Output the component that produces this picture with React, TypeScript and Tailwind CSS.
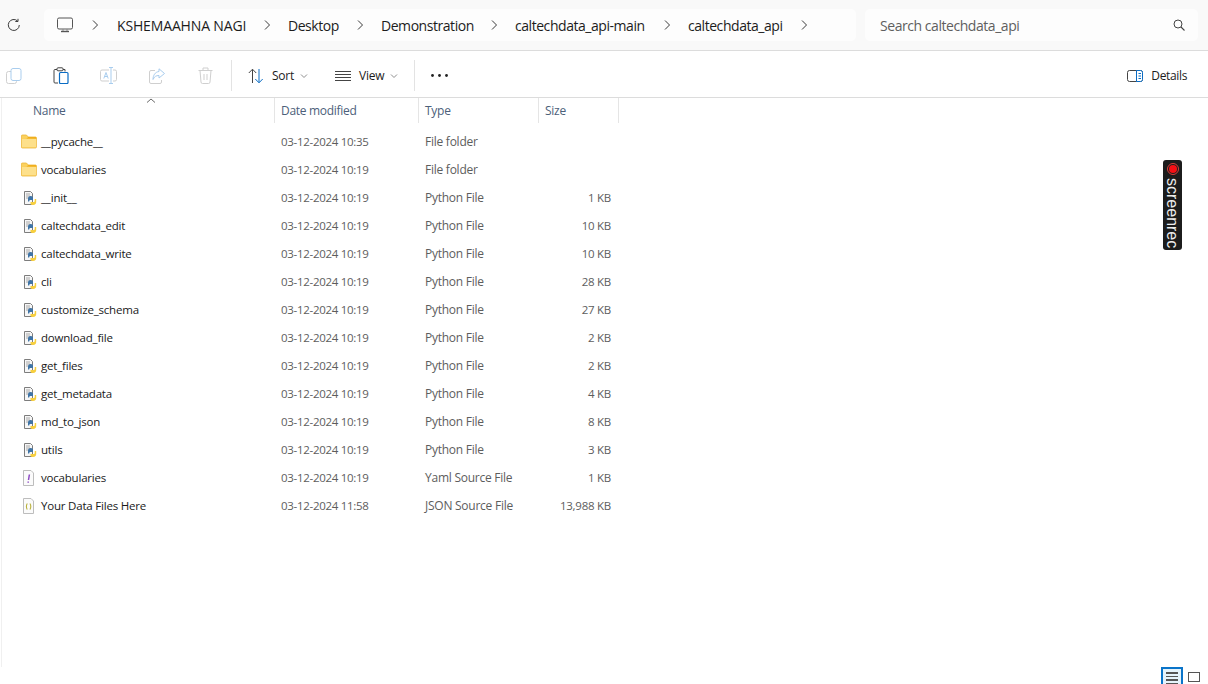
import React from "react";

const FONT = "font-['Open_Sans','Noto_Sans',sans-serif]";

const Chevron = () => (
  <svg width="8" height="12" viewBox="0 0 8 12" fill="none" className="shrink-0">
    <path d="M2 1.5 L6.5 6 L2 10.5" stroke="#3a3a3a" strokeWidth="1" />
  </svg>
);

const Folder = () => (
  <svg width="16" height="16" viewBox="0 0 16 16" className="shrink-0">
    <path d="M0.4 2 a1 1 0 0 1 1-1 h4 l2 2 h7 a1 1 0 0 1 1 1 v9 a1 1 0 0 1-1 1 h-13 a1 1 0 0 1-1-1z" fill="#fbd15e" stroke="#ecb63a" strokeWidth="0.8" />
    <path d="M0.6 4.4 h4.8 l2-1.4 h7 a1 1 0 0 1 1 1 v.8z" fill="#f0ae1c" />
    <rect x="1" y="5" width="14" height="8.2" fill="#fde08b" />
  </svg>
);

const PyFile = () => (
  <svg width="16" height="16" viewBox="0 0 16 16" className="shrink-0">
    <path d="M3.5 1.5 h6 l2 2 v11 h-8z" fill="#f6f6f6" stroke="#7d7d7d" />
    <path d="M5 4 h4 M5 6 h4 M5 8 h2" stroke="#a0a0a0" strokeWidth="0.9" />
    <path d="M7 11.5 V8.5 c0-1.2 .8-2.5 2.7-2.5 s2.3 1 2.3 2 V10 H9.5 c-.8 0-1.3 .5-1.3 1.5 z" fill="#3f74a6" />
    <path d="M15.2 9 V12 c0 1.6-1 3-3 3 s-2.7-.8-2.7-1.6 V12 H12.5 c.8 0 1.2-.5 1.2-1.5 V9z" fill="#f7cf3f" />
  </svg>
);

const YamlFile = () => (
  <svg width="16" height="16" viewBox="0 0 16 16" className="shrink-0">
    <path d="M2.5 0.5 h7.5 l2.5 2.5 v12.5 h-10z" fill="#fbfbfb" stroke="#bdbdbd" />
    <path d="M8.4 4.5 L7.5 10 M7.2 11.5 V12.8" stroke="#8d4bc4" strokeWidth="1.5" />
  </svg>
);

const JsonFile = () => (
  <svg width="16" height="16" viewBox="0 0 16 16" className="shrink-0">
    <path d="M2.5 0.5 h7.5 l2.5 2.5 v12.5 h-10z" fill="#fbfbfb" stroke="#bdbdbd" />
    <path d="M6.3 5.5 C5.1 7 5.1 10 6.3 11.5 M8.9 5.5 C10.1 7 10.1 10 8.9 11.5" stroke="#b9b13a" strokeWidth="1.1" fill="none" />
  </svg>
);

type Row = { n: string; d: string; t: string; s: string; i: "folder" | "py" | "yaml" | "json" };

const rows: Row[] = [
  { n: "__pycache__", d: "03-12-2024 10:35", t: "File folder", s: "", i: "folder" },
  { n: "vocabularies", d: "03-12-2024 10:19", t: "File folder", s: "", i: "folder" },
  { n: "__init__", d: "03-12-2024 10:19", t: "Python File", s: "1 KB", i: "py" },
  { n: "caltechdata_edit", d: "03-12-2024 10:19", t: "Python File", s: "10 KB", i: "py" },
  { n: "caltechdata_write", d: "03-12-2024 10:19", t: "Python File", s: "10 KB", i: "py" },
  { n: "cli", d: "03-12-2024 10:19", t: "Python File", s: "28 KB", i: "py" },
  { n: "customize_schema", d: "03-12-2024 10:19", t: "Python File", s: "27 KB", i: "py" },
  { n: "download_file", d: "03-12-2024 10:19", t: "Python File", s: "2 KB", i: "py" },
  { n: "get_files", d: "03-12-2024 10:19", t: "Python File", s: "2 KB", i: "py" },
  { n: "get_metadata", d: "03-12-2024 10:19", t: "Python File", s: "4 KB", i: "py" },
  { n: "md_to_json", d: "03-12-2024 10:19", t: "Python File", s: "8 KB", i: "py" },
  { n: "utils", d: "03-12-2024 10:19", t: "Python File", s: "3 KB", i: "py" },
  { n: "vocabularies", d: "03-12-2024 10:19", t: "Yaml Source File", s: "1 KB", i: "yaml" },
  { n: "Your Data Files Here", d: "03-12-2024 11:58", t: "JSON Source File", s: "13,988 KB", i: "json" },
];

const FileIcon = ({ i }: { i: Row["i"] }) =>
  i === "folder" ? <Folder /> : i === "py" ? <PyFile /> : i === "yaml" ? <YamlFile /> : <JsonFile />;

export default function App() {
  return (
    <div className={`${FONT} relative flex h-[684px] w-[1208px] flex-col overflow-hidden bg-white text-[12px] tracking-[-0.25px]`}>
      {/* Address bar */}
      <div className="flex h-[51px] shrink-0 items-center border-b border-[#dcdcdc] bg-[#f9f9f9]">
        <div className="flex w-[44px] shrink-0 justify-start pl-[7px]">
          <svg width="14" height="14" viewBox="0 0 14 14" fill="none">
            <path d="M12.3 7 A5.5 5.5 0 1 1 10.6 3" stroke="#3c3c3c" strokeWidth="1" />
            <path d="M11 0.8 V3.5 H8.3" stroke="#3c3c3c" strokeWidth="1" />
          </svg>
        </div>
        <div className="flex h-[32px] w-[812px] shrink-0 items-center rounded-[5px] bg-[#fdfdfd] pl-[13px] text-[14px] tracking-[-0.45px] text-[#1c1c1c]">
          <svg width="16" height="16" viewBox="0 0 16 16" fill="none" className="mr-[18px] shrink-0">
            <rect x="0.5" y="1" width="15" height="11" rx="1.5" stroke="#555" />
            <path d="M4 14.5 H12" stroke="#555" strokeWidth="1.4" />
            <path d="M6 12 V14 M10 12 V14" stroke="#888" />
          </svg>
          <Chevron />
          <span className="ml-[18px] mr-[17px] w-[129px] whitespace-nowrap tracking-[-0.15px]">KSHEMAAHNA NAGI</span>
          <Chevron />
          <span className="ml-[17px] mr-[17px] w-[51px] whitespace-nowrap">Desktop</span>
          <Chevron />
          <span className="ml-[17px] mr-[17px] w-[92px] whitespace-nowrap">Demonstration</span>
          <Chevron />
          <span className="ml-[17px] mr-[17px] w-[131px] whitespace-nowrap">caltechdata_api-main</span>
          <Chevron />
          <span className="ml-[17px] mr-[17px] w-[95px] whitespace-nowrap">caltechdata_api</span>
          <Chevron />
        </div>
        <div className="ml-[9px] flex h-[32px] w-[333px] shrink-0 items-center justify-between rounded-[5px] bg-[#fdfdfd] pl-[15px] pr-[13px] text-[14px] tracking-[-0.45px] text-[#5f5f5f]">
          <span>Search caltechdata_api</span>
          <svg width="12" height="12" viewBox="0 0 12 12" fill="none">
            <circle cx="5" cy="5" r="4" stroke="#444" />
            <path d="M8 8 L11.5 11.5" stroke="#444" strokeWidth="1.1" />
          </svg>
        </div>
      </div>

      {/* Command bar */}
      <div className="flex h-[47px] shrink-0 items-center border-b border-[#dcdcdc] pl-[6px] pr-[21px] pt-[3px]">
        <svg width="16" height="16" viewBox="0 0 16 16" fill="none" className="shrink-0">
          <rect x="0.5" y="3.5" width="10" height="12" rx="2" stroke="#d0d0d0" />
          <rect x="5" y="0.5" width="10" height="12" rx="2" fill="#fff" stroke="#a9cdee" />
        </svg>
        <svg width="16" height="17" viewBox="0 0 16 17" fill="none" className="ml-[31px] shrink-0">
          <path d="M5 2.5 H2 a1 1 0 0 0-1 1 V15 a1 1 0 0 0 1 1 H5" stroke="#444" />
          <path d="M10 2.5 H12 V4.5" stroke="#444" />
          <rect x="4" y="0.8" width="6" height="3" rx="1" fill="#fff" stroke="#444" />
          <rect x="6.5" y="5.5" width="8.5" height="11" rx="1" fill="#fff" stroke="#0a6cc4" strokeWidth="1.2" />
        </svg>
        <svg width="17" height="17" viewBox="0 0 17 17" fill="none" className="ml-[31px] shrink-0">
          <path d="M9 3 H2 a1.5 1.5 0 0 0-1.5 1.5 v8 A1.5 1.5 0 0 0 2 14 H9" stroke="#cfcfcf" />
          <path d="M13 3 h2 a1.5 1.5 0 0 1 1.5 1.5 v8 A1.5 1.5 0 0 1 15 14 h-2" stroke="#cfcfcf" />
          <path d="M9 0.5 H13 M9 16.5 H13 M11 0.5 V16.5" stroke="#a9cdee" />
          <path d="M3.8 11.5 L6 5.5 L8.2 11.5 M4.6 9.5 H7.4" stroke="#a9cdee" />
        </svg>
        <svg width="16" height="16" viewBox="0 0 16 16" fill="none" className="ml-[32px] shrink-0">
          <path d="M6 2.5 H2 a1.5 1.5 0 0 0-1.5 1.5 V14 a1.5 1.5 0 0 0 1.5 1.5 H11 a1.5 1.5 0 0 0 1.5-1.5 V12" stroke="#cfcfcf" />
          <path d="M10 0.8 L15.5 5.5 L10 10 V7.5 C7 7.5 5.5 8.5 4 11.5 C4 7.5 6 4 10 3.5z" fill="#fff" stroke="#a9cdee" />
        </svg>
        <svg width="15" height="17" viewBox="0 0 15 17" fill="none" className="ml-[33px] shrink-0">
          <path d="M0.5 3.5 H14.5 M5 3 V1 H10 V3" stroke="#cfcfcf" />
          <path d="M2 3.5 L3 15 a1.5 1.5 0 0 0 1.5 1.5 h6 a1.5 1.5 0 0 0 1.5-1.5 L13 3.5" stroke="#cfcfcf" />
          <path d="M6 7 V13 M9 7 V13" stroke="#cfcfcf" />
        </svg>
        <div className="ml-[18px] h-[31px] w-px shrink-0 bg-[#e3e3e3]" />
        <svg width="16" height="16" viewBox="0 0 16 16" fill="none" className="ml-[16px] shrink-0">
          <path d="M4.5 15 V1.5 M0.8 5 L4.5 1.2 L8.2 5" stroke="#444" />
          <path d="M11 1 V14.5 M7.3 11 L11 14.8 L14.7 11" stroke="#0a6cc4" />
        </svg>
        <span className="ml-[8px] text-[#1c1c1c]">Sort</span>
        <svg width="8" height="6" viewBox="0 0 8 6" fill="none" className="ml-[6px] shrink-0">
          <path d="M1 1.5 L4 4.5 L7 1.5" stroke="#8f8f8f" />
        </svg>
        <svg width="16" height="10" viewBox="0 0 16 10" fill="none" className="ml-[27px] shrink-0">
          <path d="M0 .5 H16 M0 3.5 H16 M0 6.5 H16 M0 9.5 H16" stroke="#444" />
        </svg>
        <span className="ml-[8px] text-[#1c1c1c]">View</span>
        <svg width="8" height="6" viewBox="0 0 8 6" fill="none" className="ml-[6px] shrink-0">
          <path d="M1 1.5 L4 4.5 L7 1.5" stroke="#8f8f8f" />
        </svg>
        <div className="ml-[16px] h-[31px] w-px shrink-0 bg-[#e3e3e3]" />
        <svg width="17" height="3" viewBox="0 0 17 3" className="ml-[16px] shrink-0">
          <circle cx="1.5" cy="1.5" r="1.4" fill="#222" />
          <circle cx="8.5" cy="1.5" r="1.4" fill="#222" />
          <circle cx="15.5" cy="1.5" r="1.4" fill="#222" />
        </svg>
        <div className="flex-1" />
        <svg width="16" height="12" viewBox="0 0 16 12" fill="none" className="shrink-0">
          <rect x="0.5" y="0.5" width="15" height="11" rx="2" stroke="#444" />
          <path d="M9.5 .5 H13.5 a2 2 0 0 1 2 2 v7 a2 2 0 0 1-2 2 H9.5z" fill="#fff" stroke="#0a6cc4" />
          <path d="M11.5 3.5 H14 M11.5 6 H14 M11.5 8.5 H14" stroke="#0a6cc4" />
        </svg>
        <span className="ml-[8px] text-[#1c1c1c] tracking-[-0.35px]">Details</span>
      </div>

      {/* Content */}
      <div className="relative ml-px flex min-h-0 flex-1 flex-col border-l border-[#f0f0f0]">
        <svg width="10" height="5" viewBox="0 0 10 5" fill="none" className="absolute left-[144px] top-[0px]">
          <path d="M1 4.5 L5 1 L9 4.5" stroke="#6a6a6a" />
        </svg>
        <div className="flex h-[25px] shrink-0 text-[#4c607a]">
          <div className="flex w-[273px] items-center border-r border-[#e5e5e5] pl-[31px]">Name</div>
          <div className="flex w-[144px] items-center border-r border-[#e5e5e5] pl-[6px] tracking-[-0.3px]">Date modified</div>
          <div className="flex w-[120px] items-center border-r border-[#e5e5e5] pl-[6px]">Type</div>
          <div className="flex w-[80px] items-center border-r border-[#e5e5e5] pl-[6px]">Size</div>
        </div>
        <div className="mt-[5px] flex flex-col">
          {rows.map((r, idx) => (
            <div key={idx} className="flex h-[28px] items-center">
              <div className="flex w-[273px] items-center gap-[4px] pl-[19px] text-[11.5px] tracking-[-0.2px] text-[#1a1a1a]">
                <FileIcon i={r.i} />
                <span className="whitespace-nowrap">{r.n}</span>
              </div>
              <div className="w-[144px] whitespace-nowrap pl-[6px] text-[11.5px] tracking-[-0.3px] text-[#5d5d5d]">{r.d}</div>
              <div className="w-[120px] whitespace-nowrap pl-[6px] text-[#5d5d5d]">{r.t}</div>
              <div className="w-[72px] whitespace-nowrap text-right text-[11.5px] text-[#5d5d5d]">{r.s}</div>
            </div>
          ))}
        </div>
      </div>

      {/* Status bar view toggles */}
      <div className="flex h-[17px] shrink-0 items-start justify-end pr-[8px]">
        <div className="flex h-[17px] w-[22px] flex-col items-center gap-[2px] border-x-2 border-t-2 border-[#0a74c9] bg-[#e5f3fb] pt-[3px]">
          <div className="h-[1.5px] w-[12px] bg-[#555]" />
          <div className="h-[1.5px] w-[12px] bg-[#555]" />
          <div className="h-[1.5px] w-[12px] bg-[#555]" />
          <div className="h-[1.5px] w-[12px] bg-[#555]" />
        </div>
        <div className="ml-[5px] mt-[5px] flex flex-col gap-[2px]">
          <div className="h-[10px] w-[12px] border border-[#555]" />
          <div className="h-[1px] w-[12px] bg-[#555]" />
        </div>
      </div>

      {/* Recording badge overlay */}
      <div className="absolute left-[1163px] top-[160px] flex h-[90px] w-[19px] flex-col items-center rounded-[3px] bg-[#1c1c1c] pt-[3px]">
        <div className="flex h-[12px] w-[12px] items-center justify-center rounded-full border border-[#d9403b]">
          <div className="h-[8px] w-[8px] rounded-full bg-[#f50f14]" />
        </div>
        <span className="mt-[3px] font-['Liberation_Sans',sans-serif] text-[16px] leading-[19px] tracking-[0] text-[#ececec] [writing-mode:vertical-rl]">screenrec</span>
      </div>
    </div>
  );
}
